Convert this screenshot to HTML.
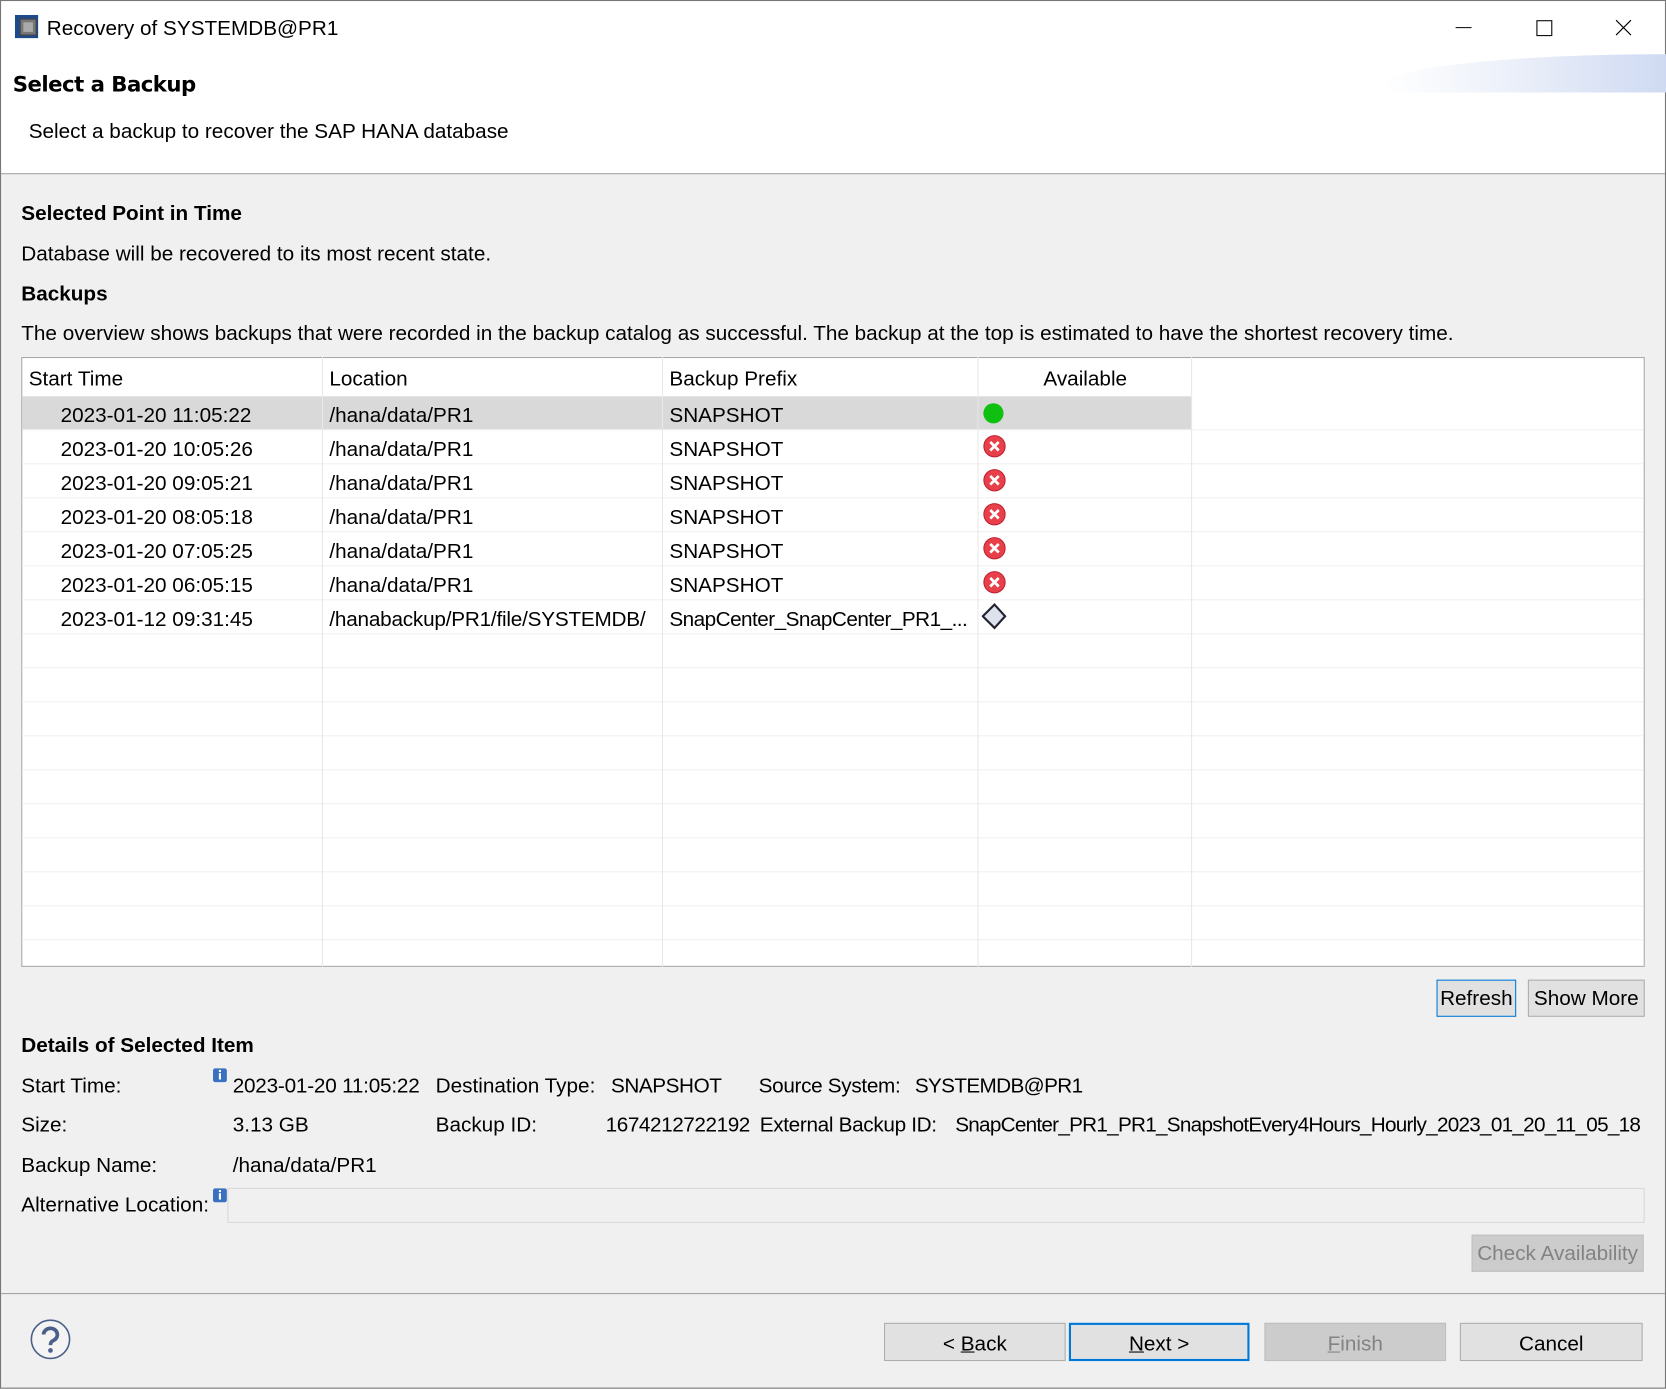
<!DOCTYPE html>
<html><head><style>
html,body{margin:0;padding:0;width:1666px;height:1389px;overflow:hidden;background:#f0f0f0}
#w{position:absolute;left:0;top:0;width:1568px;height:1307px;transform:scale(1.0625);transform-origin:0 0;font-family:"Liberation Sans",sans-serif;font-size:19.5px;color:#000;background:#f0f0f0}
.a{position:absolute;white-space:nowrap;line-height:24px;margin-top:1px}
.b{font-weight:bold}
.btn{position:absolute;border:1px solid #adadad;background:#e1e1e1;text-align:center;line-height:34px;box-sizing:border-box}
.row{position:absolute;left:21px;width:1526px;height:32px;border-bottom:1px solid #f0f0f0;box-sizing:border-box}
.vl{position:absolute;top:336px;height:574px;width:1px;background:#e8e8e8}
</style></head><body><div id="w">
<div style="position:absolute;left:0;top:0;width:1568px;height:163px;background:#fff;border-bottom:1px solid #a0a0a0"></div>
<div style="position:absolute;left:0;top:0;width:1566px;height:1305px;border:1px solid #777"></div>
<svg style="position:absolute;left:14px;top:14px" width="22" height="22"><rect x="0" y="0" width="22" height="22" fill="#1e4a8a"/><rect x="5" y="4" width="15" height="15" fill="#777" stroke="#444"/><rect x="8" y="7" width="9" height="9" fill="#aaa"/></svg>
<div class="a" style="left:44px;top:14px">Recovery of SYSTEMDB@PR1</div>
<svg style="position:absolute;left:1360px;top:12px" width="190" height="30"><line x1="10" y1="14" x2="25" y2="14" stroke="#000"/><rect x="86.5" y="7.5" width="14" height="14" fill="none" stroke="#000"/><path d="M161 7L175 21M175 7L161 21" stroke="#000"/></svg>
<div style="position:absolute;left:1303px;top:51px;width:265px;height:36px;background:linear-gradient(90deg,#fff,#eef2fa 40%,#cfdaf2);border-top-left-radius:100% 80%"></div>
<div class="a" style="left:12px;top:66px;font-size:20px;font-weight:bold;font-family:'DejaVu Sans',sans-serif;letter-spacing:-0.5px">Select a Backup</div>
<div class="a" style="left:27px;top:111px">Select a backup to recover the SAP HANA database</div>
<div class="a b" style="left:20px;top:188px">Selected Point in Time</div>
<div class="a" style="left:20px;top:226px">Database will be recovered to its most recent state.</div>
<div class="a b" style="left:20px;top:264px">Backups</div>
<div class="a" style="left:20px;top:301px">The overview shows backups that were recorded in the backup catalog as successful. The backup at the top is estimated to have the shortest recovery time.</div>
<div style="position:absolute;left:20px;top:336px;width:1526px;height:572px;background:#fff;border:1px solid #a8a8a8"></div>
<div class="row" style="top:373px"></div><div class="row" style="top:405px"></div><div class="row" style="top:437px"></div><div class="row" style="top:469px"></div><div class="row" style="top:501px"></div><div class="row" style="top:533px"></div><div class="row" style="top:565px"></div><div class="row" style="top:597px"></div><div class="row" style="top:629px"></div><div class="row" style="top:661px"></div><div class="row" style="top:693px"></div><div class="row" style="top:725px"></div><div class="row" style="top:757px"></div><div class="row" style="top:789px"></div><div class="row" style="top:821px"></div><div class="row" style="top:853px"></div>
<div style="position:absolute;left:21px;top:373px;width:1100px;height:31px;background:#d9d9d9"></div>
<div class="vl" style="left:303px"></div><div class="vl" style="left:623px"></div><div class="vl" style="left:920px"></div><div class="vl" style="left:1121px"></div>
<div class="a" style="left:27px;top:344px">Start Time</div><div class="a" style="left:310px;top:344px">Location</div><div class="a" style="left:630px;top:344px">Backup Prefix</div><div class="a" style="left:982px;top:344px">Available</div>
<div class="a" style="left:57px;top:378px">2023-01-20 11:05:22</div><div class="a" style="left:57px;top:410px">2023-01-20 10:05:26</div>
<div class="a" style="left:57px;top:442px">2023-01-20 09:05:21</div><div class="a" style="left:57px;top:474px">2023-01-20 08:05:18</div><div class="a" style="left:57px;top:506px">2023-01-20 07:05:25</div><div class="a" style="left:57px;top:538px">2023-01-20 06:05:15</div><div class="a" style="left:57px;top:570px">2023-01-12 09:31:45</div>
<div class="a" style="left:310px;top:378px">/hana/data/PR1</div><div class="a" style="left:310px;top:410px">/hana/data/PR1</div><div class="a" style="left:310px;top:442px">/hana/data/PR1</div><div class="a" style="left:310px;top:474px">/hana/data/PR1</div><div class="a" style="left:310px;top:506px">/hana/data/PR1</div><div class="a" style="left:310px;top:538px">/hana/data/PR1</div><div class="a" style="left:310px;top:570px;letter-spacing:-0.2px">/hanabackup/PR1/file/SYSTEMDB/</div>
<div class="a" style="left:630px;top:378px">SNAPSHOT</div><div class="a" style="left:630px;top:410px">SNAPSHOT</div><div class="a" style="left:630px;top:442px">SNAPSHOT</div><div class="a" style="left:630px;top:474px">SNAPSHOT</div><div class="a" style="left:630px;top:506px">SNAPSHOT</div><div class="a" style="left:630px;top:538px">SNAPSHOT</div><div class="a" style="left:630px;top:570px;letter-spacing:-0.5px">SnapCenter_SnapCenter_PR1_...</div>
<svg style="position:absolute;left:924px;top:378px" width="26" height="220">
<circle cx="11" cy="11" r="9.5" fill="#10c010"/>
<g fill="#e8404a" stroke="#c02030" stroke-width="1"><circle cx="12" cy="42" r="10"/><circle cx="12" cy="74" r="10"/><circle cx="12" cy="106" r="10"/><circle cx="12" cy="138" r="10"/><circle cx="12" cy="170" r="10"/></g>
<g stroke="#fff" stroke-width="2.5"><path d="M8 38l8 8M16 38l-8 8"/><path d="M8 70l8 8M16 70l-8 8"/><path d="M8 102l8 8M16 102l-8 8"/><path d="M8 134l8 8M16 134l-8 8"/><path d="M8 166l8 8M16 166l-8 8"/></g>
<path d="M12 191L22 202L12 213L1 202Z" fill="#dde2ec" stroke="#223" stroke-width="2"/></svg>
<div class="btn" style="left:1352px;top:922px;width:75px;height:35px;border-color:#0078d7">Refresh</div>
<div class="btn" style="left:1438px;top:922px;width:110px;height:35px">Show More</div>
<div class="a b" style="left:20px;top:971px">Details of Selected Item</div>
<div class="a" style="left:20px;top:1009px">Start Time:</div>
<div class="a" style="left:219px;top:1009px;letter-spacing:-0.2px">2023-01-20 11:05:22</div><div class="a" style="left:410px;top:1009px">Destination Type:</div><div class="a" style="left:575px;top:1009px;letter-spacing:-0.4px">SNAPSHOT</div><div class="a" style="left:714px;top:1009px;letter-spacing:-0.3px">Source System:</div><div class="a" style="left:861px;top:1009px;letter-spacing:-0.6px">SYSTEMDB@PR1</div>
<div class="a" style="left:20px;top:1046px">Size:</div><div class="a" style="left:219px;top:1046px">3.13 GB</div><div class="a" style="left:410px;top:1046px">Backup ID:</div><div class="a" style="left:570px;top:1046px;letter-spacing:-0.4px">1674212722192</div><div class="a" style="left:715px;top:1046px;letter-spacing:-0.3px">External Backup ID:</div><div class="a" style="left:899px;top:1046px;letter-spacing:-0.7px">SnapCenter_PR1_PR1_SnapshotEvery4Hours_Hourly_2023_01_20_11_05_18</div>
<div class="a" style="left:20px;top:1084px">Backup Name:</div><div class="a" style="left:219px;top:1084px">/hana/data/PR1</div>
<div class="a" style="left:20px;top:1121px">Alternative Location:</div>
<svg style="position:absolute;left:200px;top:1005px" width="14" height="14"><rect x=".5" y=".5" width="13" height="13" rx="2" fill="#3a70c0"/><rect x="6" y="5" width="2" height="6" fill="#fff"/><rect x="6" y="2" width="2" height="2" fill="#fff"/></svg>
<svg style="position:absolute;left:200px;top:1118px" width="14" height="14"><rect x=".5" y=".5" width="13" height="13" rx="2" fill="#3a70c0"/><rect x="6" y="5" width="2" height="6" fill="#fff"/><rect x="6" y="2" width="2" height="2" fill="#fff"/></svg>
<div style="position:absolute;left:214px;top:1118px;width:1334px;height:33px;box-sizing:border-box;border:1px solid #d8d8d8;background:#f0f0f0"></div>
<div class="btn" style="left:1385px;top:1162px;width:162px;height:35px;background:#ccc;border-color:#bfbfbf;color:#838383">Check Availability</div>
<div style="position:absolute;left:1px;top:1217px;width:1566px;height:1px;background:#a0a0a0"></div>
<svg style="position:absolute;left:28px;top:1241px" width="40" height="40"><circle cx="19.5" cy="19.5" r="18" fill="#f4f4f4" stroke="#4a6088" stroke-width="1.5"/><path d="M13 15a6.5 6 0 1 1 9.5 5.5c-2 1-3 2-3 4.5" fill="none" stroke="#4a6088" stroke-width="3.5"/><circle cx="19.5" cy="30" r="2.2" fill="#4a6088"/></svg>
<div class="btn" style="left:832px;top:1245px;width:171px;height:36px;line-height:38px">&lt; <u>B</u>ack</div>
<div class="btn" style="left:1006px;top:1245px;width:170px;height:36px;border:2px solid #0078d7;line-height:36px"><u>N</u>ext &gt;</div>
<div class="btn" style="left:1190px;top:1245px;width:171px;height:36px;background:#ccc;border-color:#bfbfbf;color:#838383;line-height:38px"><u>F</u>inish</div>
<div class="btn" style="left:1374px;top:1245px;width:172px;height:36px;line-height:38px">Cancel</div>
</div></body></html>
